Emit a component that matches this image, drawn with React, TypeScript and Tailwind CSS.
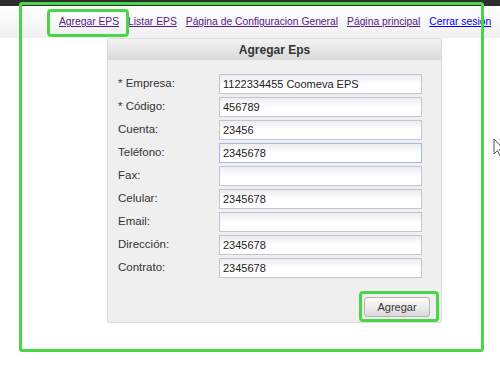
const fields = [
  { label: '* Empresa:', value: '1122334455 Coomeva EPS' },
  { label: '* Código:', value: '456789' },
  { label: 'Cuenta:', value: '23456' },
  { label: 'Teléfono:', value: '2345678', focused: true },
  { label: 'Fax:', value: '' },
  { label: 'Celular:', value: '2345678' },
  { label: 'Email:', value: '' },
  { label: 'Dirección:', value: '2345678' },
  { label: 'Contrato:', value: '2345678' },
];

const links = [
  { text: 'Agregar EPS', visited: true },
  { text: 'Listar EPS', visited: true },
  { text: 'Página de Configuracion General', visited: true },
  { text: 'Página principal', visited: true },
  { text: 'Cerrar sesion', visited: false },
];

export default function App() {
  return (
    <div className="relative w-[500px] h-[367px] overflow-hidden bg-white font-['Liberation_Sans',Arial,sans-serif] text-[#333]">
      <div className="h-[6px] bg-[#2e2e2e]" />
      <div className="h-[32px] bg-gradient-to-b from-white to-[#f0f0f0] flex items-center pl-[59px] gap-[9px] whitespace-nowrap text-[10.3px]">
        {links.map((l) => (
          <a
            key={l.text}
            href="#"
            className={l.visited ? 'underline text-[#551a8b]' : 'underline text-[#0000ee]'}
          >
            {l.text}
          </a>
        ))}
      </div>

      <div className="ml-[107px] w-[335px] bg-[#efefef] border border-[#dcdcdc] rounded-[2px]">
        <div className="h-[21px] bg-gradient-to-b from-[#f3f3f3] to-[#d9d9d9] flex items-center justify-center text-[12px] font-bold text-[#333]">
          Agregar Eps
        </div>
        <div className="pt-[12px] pl-[10px] pr-[19px]">
          {fields.map((f) => (
            <div key={f.label} className="flex items-center h-[23px]">
              <label className="w-[101px] text-[11.5px] text-[#333]">{f.label}</label>
              <input
                readOnly
                value={f.value}
                className={
                  'w-[203px] h-[20px] px-[3px] text-[11px] text-[#222] outline-none border bg-gradient-to-b from-[#ececf0] via-white to-white ' +
                  (f.focused ? 'border-[#9fbbe0]' : 'border-[#c4c4d2]')
                }
              />
            </div>
          ))}
        </div>
        <div className="flex justify-end pr-[11px] pt-[18px] pb-[5px]">
          <button className="w-[66px] h-[20px] rounded-[3px] border border-[#b4b4b4] bg-gradient-to-b from-[#fafafa] via-[#ececec] to-[#d8d8d8] text-[11px] text-[#333]">
            Agregar
          </button>
        </div>
      </div>

      {/* annotation highlights */}
      <div className="absolute left-[19px] top-[2px] w-[465px] h-[350px] border-[3px] border-[#48d648] rounded-[3px] pointer-events-none" />
      <div className="absolute left-[47px] top-[9px] w-[82px] h-[28px] border-[3px] border-[#48d648] rounded-[4px] pointer-events-none" />
      <div className="absolute left-[359px] top-[291px] w-[80px] h-[31px] border-[3px] border-[#48d648] rounded-[4px] pointer-events-none" />

      {/* mouse cursor */}
      <svg className="absolute left-[493px] top-[138px]" width="12" height="19" viewBox="0 0 12 19">
        <path d="M1 1 L1 16 L4.5 12.5 L7 18 L9 17 L6.5 11.5 L11 11.5 Z" fill="white" stroke="#555" strokeWidth="1" />
      </svg>
    </div>
  );
}
